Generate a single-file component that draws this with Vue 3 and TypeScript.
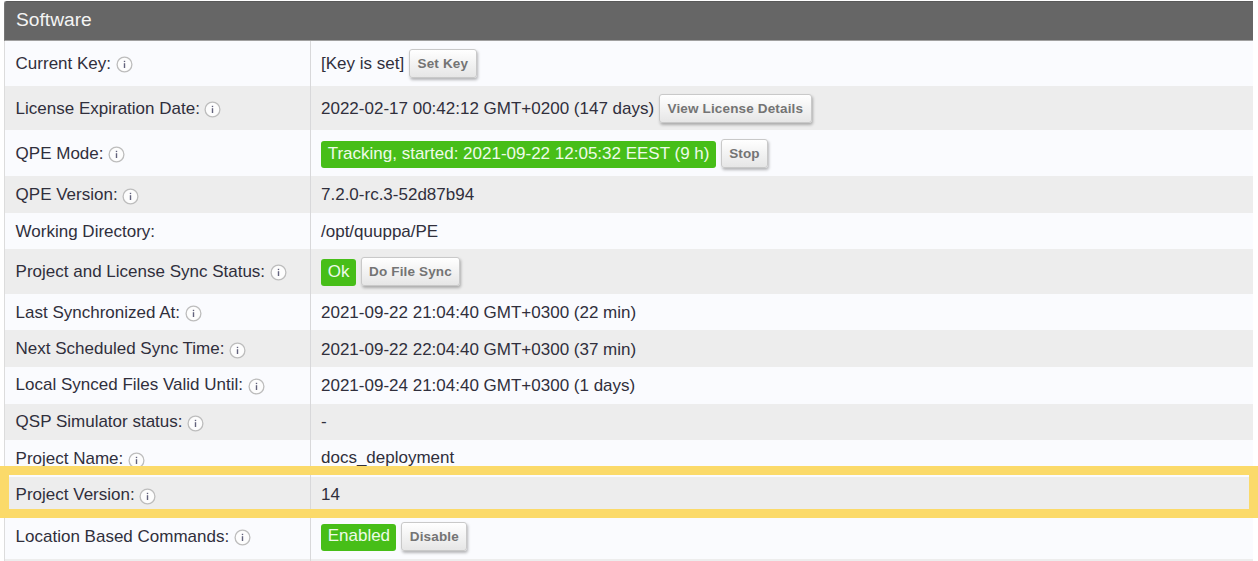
<script setup lang="ts">
interface Row {
  label: string
  height: number
  info?: boolean
  text?: string
  badge?: string
  action?: string
  labelTone?: string
  valueTone?: string
}

const rows: Row[] = [
  { label: 'Current Key:', height: 44.5, info: true, text: '[Key is set]', action: 'Set Key', labelTone: 'low', valueTone: 'low' },
  { label: 'License Expiration Date:', height: 44.5, info: true, text: '2022-02-17 00:42:12 GMT+0200 (147 days)', action: 'View License Details', labelTone: 'low', valueTone: 'low' },
  { label: 'QPE Mode:', height: 46, info: true, badge: 'Tracking, started: 2021-09-22 12:05:32 EEST (9 h)', action: 'Stop', labelTone: 'low' },
  { label: 'QPE Version:', height: 37, info: true, text: '7.2.0-rc.3-52d87b94' },
  { label: 'Working Directory:', height: 36, text: '/opt/quuppa/PE', labelTone: 'low', valueTone: 'low' },
  { label: 'Project and License Sync Status:', height: 44.5, info: true, badge: 'Ok', action: 'Do File Sync', labelTone: 'low' },
  { label: 'Last Synchronized At:', height: 36.5, info: true, text: '2021-09-22 21:04:40 GMT+0300 (22 min)', labelTone: 'low', valueTone: 'low' },
  { label: 'Next Scheduled Sync Time:', height: 37, info: true, text: '2021-09-22 22:04:40 GMT+0300 (37 min)', valueTone: 'low' },
  { label: 'Local Synced Files Valid Until:', height: 36.5, info: true, text: '2021-09-24 21:04:40 GMT+0300 (1 days)', valueTone: 'low' },
  { label: 'QSP Simulator status:', height: 36.5, info: true, text: '-' },
  { label: 'Project Name:', height: 37, info: true, text: 'docs_deployment', valueTone: 'high' },
  { label: 'Project Version:', height: 35.7, info: true, text: '14' },
  { label: 'Location Based Commands:', height: 46.3, info: true, badge: 'Enabled', action: 'Disable', labelTone: 'low' },
  { label: '', height: 10 },
]
</script>

<template>
  <main class="page">
    <section class="panel">
      <h2 class="title">Software</h2>
      <div v-for="(row, i) in rows" :key="i" class="row" :style="{ height: row.height + 'px' }">
        <div class="label">
          <span :class="row.labelTone">{{ row.label }}</span>
          <svg v-if="row.info" class="info" width="17" height="17" viewBox="0 0 17 17">
            <circle cx="8.5" cy="8.5" r="7.4" fill="#fdfdfd" stroke="#bdbdbd" stroke-width="1.3" />
            <path d="M8.5 7.2V12" stroke="#62627c" stroke-width="1.4" />
            <path d="M8.5 4.8V6.1" stroke="#62627c" stroke-width="1.4" />
          </svg>
        </div>
        <div class="value">
          <span v-if="row.text" :class="row.valueTone">{{ row.text }}</span>
          <span v-if="row.badge" class="badge">{{ row.badge }}</span>
          <button v-if="row.action" class="action" type="button">{{ row.action }}</button>
        </div>
      </div>
    </section>
    <div class="highlight"></div>
  </main>
</template>

<style>
body {
  margin: 0;
  background: #fff;
}
</style>

<style scoped>
.page {
  position: relative;
  box-sizing: border-box;
  width: 1258px;
  height: 561px;
  padding: 1px 5px 0 4px;
  overflow: hidden;
  font-family: "Liberation Sans", Arial, sans-serif;
  font-size: 17px;
  line-height: 20px;
  color: #302f3c;
}
.panel {
  box-sizing: border-box;
  border-left: 1px solid #dcdcdc;
}
.title {
  box-sizing: border-box;
  height: 40px;
  margin: 0 0 0 -1px;
  padding: 8px 0 0 11px;
  border-top: 1px solid #595959;
  border-bottom: 1px solid #a0a0a0;
  border-left: 1px solid #777;
  border-top-left-radius: 3px;
  background: #666;
  color: #f4f4f4;
  font-size: 19.2px;
  font-weight: 400;
  line-height: 20px;
}
.row {
  display: flex;
  box-sizing: border-box;
  background: #fafbfe;
  white-space: nowrap;
}
.row:nth-child(odd) {
  background: #ededed;
}
.label {
  display: flex;
  align-items: center;
  box-sizing: border-box;
  width: 306px;
  padding-left: 10.6px;
  border-right: 1px solid #d8d8da;
}
.low {
  margin-top: 2px;
}
.high {
  margin-bottom: 2px;
}
.info {
  margin: 3px 0 0 4.6px;
}
.value {
  display: flex;
  align-items: center;
  padding-left: 10px;
}
.badge {
  box-sizing: border-box;
  height: 27px;
  margin: 3px 0 0 0.4px;
  padding: 2.5px 6.3px 0;
  border-radius: 3px;
  background: #47be18;
  color: #eefbe9;
}
.action {
  box-sizing: border-box;
  height: 29px;
  margin: 1px 0 0 5px;
  padding: 1px 7.4px 0;
  border: 1.5px solid #c9c9c9;
  border-radius: 3px;
  background: linear-gradient(#fff, #e6e6e6);
  box-shadow: 1px 2px 3px rgba(0, 0, 0, 0.28);
  color: #747474;
  font: bold 13.5px/16px "Liberation Sans", Arial, sans-serif;
  letter-spacing: 0.15px;
}
.highlight {
  position: absolute;
  top: 466px;
  left: 0;
  box-sizing: border-box;
  width: 1258px;
  height: 52px;
  border: 9px solid #fbda6a;
}
</style>
